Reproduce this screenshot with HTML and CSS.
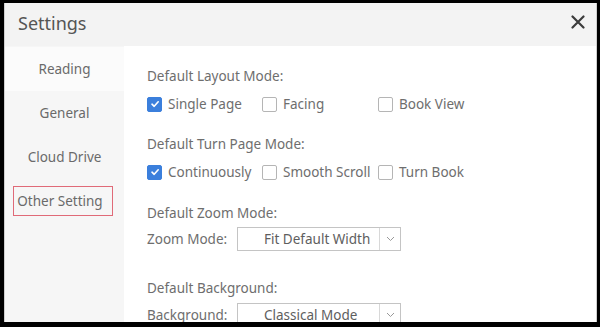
FILE: index.html
```html
<!DOCTYPE html>
<html>
<head>
<meta charset="utf-8">
<link rel="stylesheet" href="styles.css">
</head>
<body>
<div class="frame">
  <div class="window">
    <div class="header">
      <span class="title">Settings</span>
      <svg class="close" width="14" height="14" viewBox="0 0 14 14"><path d="M1.5 1.5 L12.5 12.5 M12.5 1.5 L1.5 12.5" stroke="#3c3c3c" stroke-width="2.2" stroke-linecap="round"/></svg>
    </div>
    <div class="main">
      <div class="sidebar">
        <div class="nav-item active">Reading</div>
        <div class="nav-item">General</div>
        <div class="nav-item">Cloud Drive</div>
        <div class="nav-item"><span class="highlight">Other Setting</span></div>
      </div>
      <div class="content">
        <div class="label first">Default Layout Mode:</div>
        <div class="options">
          <div class="opt"><span class="box checked"><svg width="10" height="10" viewBox="0 0 10 10"><path d="M2 5.2 L4.2 7.3 L8.2 2.8" fill="none" stroke="#fff" stroke-width="1.6" stroke-linecap="round" stroke-linejoin="round"/></svg></span>Single Page</div>
          <div class="opt"><span class="box"></span>Facing</div>
          <div class="opt"><span class="box"></span>Book View</div>
        </div>
        <div class="label sec">Default Turn Page Mode:</div>
        <div class="options">
          <div class="opt"><span class="box checked"><svg width="10" height="10" viewBox="0 0 10 10"><path d="M2 5.2 L4.2 7.3 L8.2 2.8" fill="none" stroke="#fff" stroke-width="1.6" stroke-linecap="round" stroke-linejoin="round"/></svg></span>Continuously</div>
          <div class="opt"><span class="box"></span>Smooth Scroll</div>
          <div class="opt"><span class="box"></span>Turn Book</div>
        </div>
        <div class="label sec2">Default Zoom Mode:</div>
        <div class="field zoom">
          <span class="field-label">Zoom Mode:</span>
          <div class="select"><span class="select-text">Fit Default Width</span><span class="select-arrow"><svg width="9" height="6" viewBox="0 0 9 6"><path d="M1 1 L4.5 4.5 L8 1" fill="none" stroke="#999" stroke-width="1"/></svg></span></div>
        </div>
        <div class="label sec3">Default Background:</div>
        <div class="field bg">
          <span class="field-label">Background:</span>
          <div class="select"><span class="select-text">Classical Mode</span><span class="select-arrow"><svg width="9" height="6" viewBox="0 0 9 6"><path d="M1 1 L4.5 4.5 L8 1" fill="none" stroke="#999" stroke-width="1"/></svg></span></div>
        </div>
      </div>
    </div>
  </div>
</div>
</body>
</html>
```
FILE: styles.css
```css
html, body {
  margin: 0;
  padding: 0;
  background: #000;
  width: 600px;
  height: 327px;
  overflow: hidden;
}
.frame {
  padding: 3px 4px 0 4px;
  height: 319px;
}
.window {
  width: 591px;
  height: 319px;
  background: #fff;
  border-left: 1px solid #cfcfcf;
  border-right: 1px solid #cfcfcf;
  overflow: hidden;
  font-family: "Noto Sans", "Open Sans", sans-serif;
  color: #6e6e6e;
  font-size: 13.5px;
}
.header {
  height: 43px;
  background: #f3f3f3;
  display: flex;
  align-items: center;
  justify-content: space-between;
  padding: 0 11px 0 13px;
}
.title {
  font-size: 18px;
  color: #555;
  margin-top: -4px;
}
.close {
  margin-top: -5px;
}
.main {
  display: flex;
  height: 276px;
}
.sidebar {
  width: 119px;
  background: #f6f6f6;
  padding-top: 1px;
}
.nav-item {
  height: 44px;
  display: flex;
  align-items: center;
  justify-content: center;
  color: #6a6a6a;
}
.nav-item.active {
  background: #fbfbfb;
}
.highlight {
  border: 1.5px solid #e06a78;
  padding: 5px 9px 5px 3px;
  margin-left: -3px;
}
.content {
  padding-left: 23px;
}
.label {
  height: 20px;
  line-height: 20px;
}
.label.first { margin-top: 20px; }
.label.sec { margin-top: 20px; }
.label.sec2 { margin-top: 21px; }
.label.sec3 { margin-top: 27px; }
.options {
  display: grid;
  grid-template-columns: 115px 116px 115px;
  margin-top: 8px;
  height: 20px;
}
.opt {
  display: flex;
  align-items: center;
  gap: 6px;
  height: 20px;
  white-space: nowrap;
}
.box {
  width: 13px;
  height: 13px;
  border: 1px solid #b5b5b5;
  border-radius: 2px;
  background: #fff;
  display: flex;
  align-items: center;
  justify-content: center;
  flex-shrink: 0;
}
.box.checked {
  background: #3b7fdc;
  border-color: #3b7fdc;
}
.field {
  display: flex;
  align-items: center;
  height: 24px;
}
.field.zoom { margin-top: 4px; }
.field.bg { margin-top: 5px; }
.field-label {
  width: 90px;
}
.select {
  width: 162px;
  height: 22px;
  border: 1px solid #c4c4c4;
  display: flex;
  align-items: stretch;
  background: #fff;
}
.select-text {
  flex: 1;
  text-align: left;
  line-height: 22px;
  padding-left: 26px;
  color: #5e5e5e;
  white-space: nowrap;
}
.select-arrow {
  width: 20px;
  border-left: 1px solid #d8d8d8;
  display: flex;
  align-items: center;
  justify-content: center;
}
```
